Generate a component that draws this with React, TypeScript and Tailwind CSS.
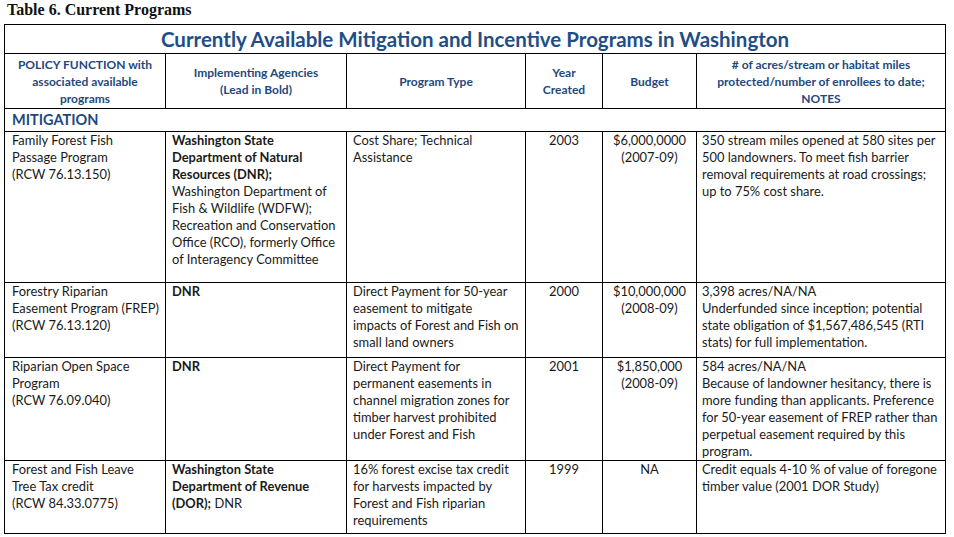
import type { ReactNode } from "react";

type Row = {
  policy: string[];
  agencies: ReactNode[];
  type: string[];
  year: string;
  budget: string[];
  notes: string[];
  height: string;
};

const rows: Row[] = [
  {
    policy: ["Family Forest Fish", "Passage Program", "(RCW 76.13.150)"],
    agencies: [
      <b>Washington State</b>,
      <b>Department of Natural</b>,
      <b>Resources (DNR);</b>,
      "Washington Department of",
      "Fish & Wildlife (WDFW);",
      "Recreation and Conservation",
      "Office (RCO), formerly Office",
      "of Interagency Committee",
    ],
    type: ["Cost Share; Technical", "Assistance"],
    year: "2003",
    budget: ["$6,000,0000", "(2007-09)"],
    notes: [
      "350 stream miles opened at 580 sites per",
      "500 landowners. To meet fish barrier",
      "removal requirements at road crossings;",
      "up to 75% cost share.",
    ],
    height: "h-[151px]",
  },
  {
    policy: ["Forestry Riparian", "Easement Program (FREP)", "(RCW 76.13.120)"],
    agencies: [<b>DNR</b>],
    type: [
      "Direct Payment for 50-year",
      "easement to mitigate",
      "impacts of Forest and Fish on",
      "small land owners",
    ],
    year: "2000",
    budget: ["$10,000,000", "(2008-09)"],
    notes: [
      "3,398 acres/NA/NA",
      "Underfunded since inception; potential",
      "state obligation of $1,567,486,545 (RTI",
      "stats) for full implementation.",
    ],
    height: "h-[75px]",
  },
  {
    policy: ["Riparian Open Space", "Program", "(RCW 76.09.040)"],
    agencies: [<b>DNR</b>],
    type: [
      "Direct Payment for",
      "permanent easements in",
      "channel migration zones for",
      "timber harvest prohibited",
      "under Forest and Fish",
    ],
    year: "2001",
    budget: ["$1,850,000", "(2008-09)"],
    notes: [
      "584 acres/NA/NA",
      "Because of landowner hesitancy, there is",
      "more funding than applicants. Preference",
      "for 50-year easement of FREP rather than",
      "perpetual easement required by this",
      "program.",
    ],
    height: "h-[102px]",
  },
  {
    policy: ["Forest and Fish Leave", "Tree Tax credit", "(RCW 84.33.0775)"],
    agencies: [
      <b>Washington State</b>,
      <b>Department of Revenue</b>,
      <>
        <b>(DOR);</b> DNR
      </>,
    ],
    type: [
      "16% forest excise tax credit",
      "for harvests impacted by",
      "Forest and Fish riparian",
      "requirements",
    ],
    year: "1999",
    budget: ["NA"],
    notes: [
      "Credit equals 4-10 % of value of foregone",
      "timber value (2001 DOR Study)",
    ],
    height: "h-[73px]",
  },
];

function Lines({ items }: { items: ReactNode[] }) {
  return (
    <>
      {items.map((line, i) => (
        <div key={i} className="whitespace-nowrap">
          {line}
        </div>
      ))}
    </>
  );
}

const head = "border border-black align-middle text-center font-bold text-[12px] leading-[17px] text-[#1f497d]";
const cell = "border border-black align-top p-0 text-[12.9px] leading-[17px] text-[#1a1a1a]";

export default function App() {
  return (
    <div className="w-[954px] h-[537px] bg-white overflow-hidden font-[Lato,sans-serif]">
      <div className="pl-[7px] h-6 font-['Liberation_Serif',serif] font-bold text-[16px] leading-[19px] text-[#111]">
        Table 6. Current Programs
      </div>

      <table className="ml-1 w-[941px] table-fixed border-collapse">
        <colgroup>
          <col className="w-[161px]" />
          <col className="w-[181px]" />
          <col className="w-[179px]" />
          <col className="w-[77px]" />
          <col className="w-[94px]" />
          <col className="w-[249px]" />
        </colgroup>
        <thead>
          <tr className="h-[29px]">
            <th colSpan={6} className="border border-black p-0 text-center font-bold text-[20.5px] leading-[24px] text-[#1f4e86]">
              Currently Available Mitigation and Incentive Programs in Washington
            </th>
          </tr>
          <tr className="h-[55px]">
            <th className={head}>
              <Lines items={["POLICY FUNCTION with", "associated available", "programs"]} />
            </th>
            <th className={head}>
              <Lines items={["Implementing Agencies", "(Lead in Bold)"]} />
            </th>
            <th className={head}>Program Type</th>
            <th className={head}>
              <Lines items={["Year", "Created"]} />
            </th>
            <th className={head}>Budget</th>
            <th className={head}>
              <Lines
                items={[
                  "# of acres/stream or habitat miles",
                  "protected/number of enrollees to date;",
                  "NOTES",
                ]}
              />
            </th>
          </tr>
        </thead>
        <tbody>
          <tr className="h-[23px]">
            <td colSpan={6} className="border border-black p-0 pl-[7px] align-middle font-bold text-[14.5px] leading-[18px] text-[#1f497d]">
              MITIGATION
            </td>
          </tr>
          {rows.map((r) => (
            <tr key={r.year} className={r.height}>
              <td className={`${cell} pl-[7px]`}>
                <Lines items={r.policy} />
              </td>
              <td className={`${cell} pl-[6px]`}>
                <Lines items={r.agencies} />
              </td>
              <td className={`${cell} pl-[6px]`}>
                <Lines items={r.type} />
              </td>
              <td className={`${cell} text-center`}>{r.year}</td>
              <td className={`${cell} text-center`}>
                <Lines items={r.budget} />
              </td>
              <td className={`${cell} pl-[5px]`}>
                <Lines items={r.notes} />
              </td>
            </tr>
          ))}
        </tbody>
      </table>
    </div>
  );
}
